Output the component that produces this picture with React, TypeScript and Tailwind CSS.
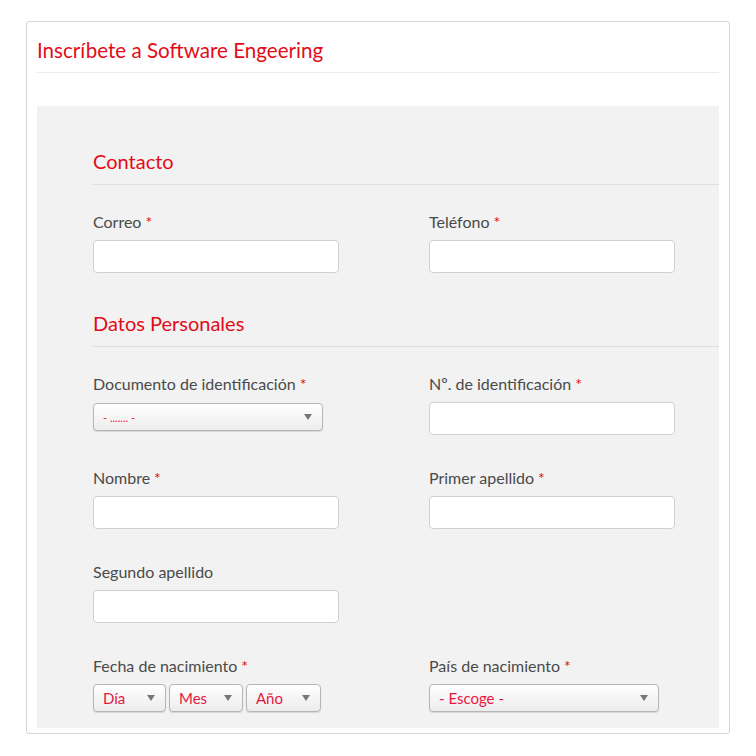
import React from "react";

const font = { fontFamily: "Lato, 'Open Sans', sans-serif" };

function Label({ text, required = true }: { text: string; required?: boolean }) {
  return (
    <div className="h-[20px] text-[16px] leading-[20px] text-[#4a4a4a]">
      {text}
      {required && <span className="ml-[4px] text-[#e30b17]">*</span>}
    </div>
  );
}

function TextInput() {
  return (
    <div className="mt-[8px] h-[33px] w-[246px] rounded-[4px] border border-[#cfcfcf] bg-white" />
  );
}

function Select({ text, width, small = false }: { text: string; width: string; small?: boolean }) {
  return (
    <div
      className={`${width} flex h-[28px] items-center justify-between rounded-[4px] border border-[#b5b5b5] bg-gradient-to-b from-white to-[#ececec] pl-[9px] pr-[10px] shadow-[0_1px_1px_rgba(0,0,0,0.12)]`}
    >
      <span className={`${small ? "text-[11px]" : "text-[15px]"} leading-none text-[#e8173f]`}>{text}</span>
      <svg width="8" height="6" viewBox="0 0 8 6">
        <path d="M0 0 L8 0 L4 6 Z" fill="#777" />
      </svg>
    </div>
  );
}

function SectionTitle({ text }: { text: string }) {
  return (
    <div>
      <h2 className="h-[24px] text-[20px] leading-[24px] text-[#e30b17]">{text}</h2>
      <div className="mt-[11px] border-t border-[#dedede]" />
    </div>
  );
}

export default function App() {
  return (
    <div className="min-h-[756px] bg-white pl-[26px] pt-[21px]" style={font}>
      <div className="h-[713px] w-[704px] overflow-hidden rounded-[3px] border border-[#d6d6d6] px-[10px] pt-[16px]">
        <h1 className="h-[24px] text-[20.6px] leading-[24px] text-[#e30b17]">
          Inscríbete a Software Engeering
        </h1>
        <div className="mt-[10px] border-t border-[#ececec]" />
        <div className="mt-[33px] h-[622px] bg-[#f2f2f2] pl-[56px] pt-[43px]">
          <SectionTitle text="Contacto" />
          <div className="mt-[27px] grid grid-cols-[336px_246px]">
            <div>
              <Label text="Correo" />
              <TextInput />
            </div>
            <div>
              <Label text="Teléfono" />
              <TextInput />
            </div>
          </div>

          <div className="mt-[38px]">
            <SectionTitle text="Datos Personales" />
          </div>
          <div className="mt-[27px] grid grid-cols-[336px_246px] gap-y-[33px]">
            <div>
              <Label text="Documento de identificación" />
              <div className="mt-[9px]">
                <Select text="- ....... -" width="w-[230px]" small />
              </div>
            </div>
            <div>
              <Label text="Nº. de identificación" />
              <TextInput />
            </div>
            <div>
              <Label text="Nombre" />
              <TextInput />
            </div>
            <div>
              <Label text="Primer apellido" />
              <TextInput />
            </div>
            <div>
              <Label text="Segundo apellido" required={false} />
              <TextInput />
            </div>
            <div />
            <div>
              <Label text="Fecha de nacimiento" />
              <div className="mt-[8px] flex gap-[3px]">
                <Select text="Día" width="w-[73px]" />
                <Select text="Mes" width="w-[74px]" />
                <Select text="Año" width="w-[75px]" />
              </div>
            </div>
            <div>
              <Label text="País de nacimiento" />
              <div className="mt-[8px]">
                <Select text="- Escoge -" width="w-[230px]" />
              </div>
            </div>
          </div>
        </div>
      </div>
    </div>
  );
}
